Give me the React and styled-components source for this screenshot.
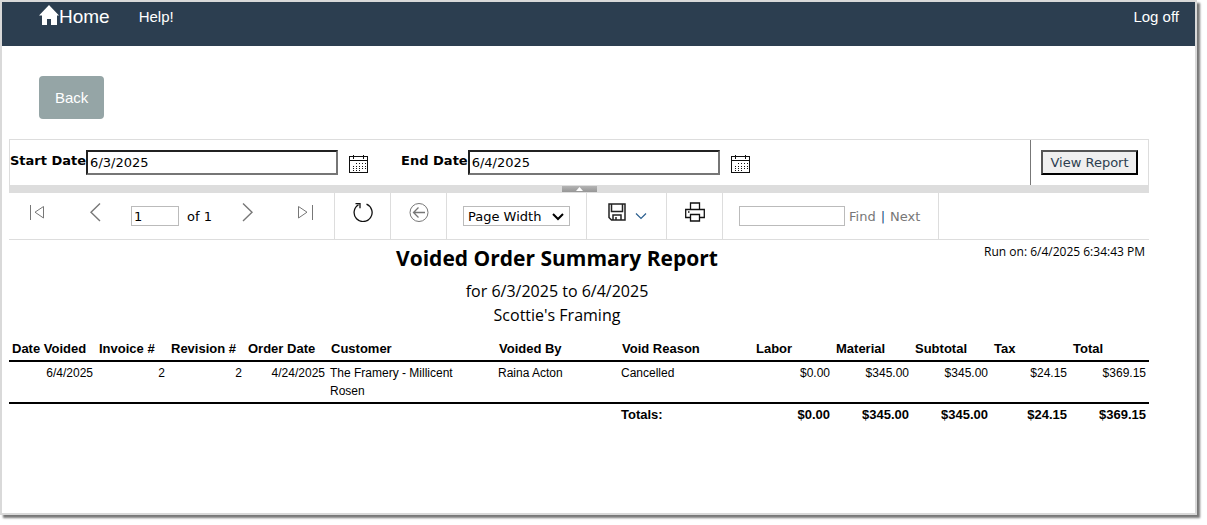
import { useState } from "react";
import styled, { createGlobalStyle } from "styled-components";

const rows = [
  {
    dateVoided: "6/4/2025",
    invoice: 2,
    revision: 2,
    orderDate: "4/24/2025",
    customer: "The Framery - Millicent Rosen",
    voidedBy: "Raina Acton",
    reason: "Cancelled",
    amounts: ["$0.00", "$345.00", "$345.00", "$24.15", "$369.15"],
  },
];

const totals = ["$0.00", "$345.00", "$345.00", "$24.15", "$369.15"];

const columns = [
  { name: "Date Voided", width: 87 },
  { name: "Invoice #", width: 72 },
  { name: "Revision #", width: 77 },
  { name: "Order Date", width: 83 },
  { name: "Customer", width: 168 },
  { name: "Voided By", width: 123 },
  { name: "Void Reason", width: 134 },
  { name: "Labor", width: 80 },
  { name: "Material", width: 79 },
  { name: "Subtotal", width: 79 },
  { name: "Tax", width: 79 },
  { name: "Total", width: 79 },
];

function HomeIcon() {
  return (
    <svg width="20" height="20" viewBox="0 0 20 20" fill="#fff">
      <path d="M10 0 L20 10.5 H18 V20 H12 V14 H8 V20 H3 V10.5 H0 Z" />
    </svg>
  );
}

function CalendarIcon() {
  return (
    <svg width="20" height="20" viewBox="0 0 20 20" fill="none" stroke="#111" shapeRendering="crispEdges">
      <path d="M0.5 2.5 H18.5 V18.5 H0.5 Z M0 6.5 H19 M4.5 1 V5 M14.5 1 V5" />
      <path d="M7 9.5 H17 M4 12.5 H17 M4 14.5 H17 M4 16.5 H13" strokeDasharray="1 2" />
    </svg>
  );
}

function FirstIcon() {
  return (
    <svg width="20" height="20" viewBox="0 0 20 20" fill="none" stroke="#777">
      <path d="M3.5 3 V18 M16.5 4.5 V16 L8 10.2 Z" />
    </svg>
  );
}

function LastIcon() {
  return (
    <svg width="20" height="20" viewBox="0 0 20 20" fill="none" stroke="#777">
      <path d="M16.5 3 V18 M2.5 4.5 V16 L11 10.2 Z" />
    </svg>
  );
}

function PrevIcon() {
  return (
    <svg width="20" height="20" viewBox="0 0 20 20" fill="none" stroke="#777" strokeWidth="1.4">
      <path d="M15 1.5 L6 10.3 L15 19" />
    </svg>
  );
}

function NextIcon() {
  return (
    <svg width="20" height="20" viewBox="0 0 20 20" fill="none" stroke="#777" strokeWidth="1.4">
      <path d="M5 1.5 L14 10.3 L5 19" />
    </svg>
  );
}

function RefreshIcon() {
  return (
    <svg width="20" height="20" viewBox="0 0 20 20" fill="none" stroke="#111" strokeWidth="1.3">
      <path d="M13.5 2.2 A9 9 0 1 1 5.5 2.8 M2.5 1.7 H7 V6.2" />
    </svg>
  );
}

function BackIcon() {
  return (
    <svg width="20" height="20" viewBox="0 0 20 20" fill="none" stroke="#777">
      <circle cx="10" cy="10.5" r="9" />
      <path d="M16 10.5 H4.5 M9.5 5.5 L4.5 10.5 L9.5 15.5" strokeWidth="1.3" />
    </svg>
  );
}

function SaveIcon() {
  return (
    <svg width="20" height="20" viewBox="0 0 20 20" fill="none" stroke="#222" strokeWidth="1.5">
      <path d="M2 2 H18 V18 H4.5 L2 15.5 Z M4.5 2 V9.5 H15.5 V2 M6 18 V13 H14 V18 M9 15 V18" />
    </svg>
  );
}

function PrintIcon() {
  return (
    <svg width="20" height="20" viewBox="0 0 20 20" fill="none" stroke="#111" strokeWidth="1.3">
      <path d="M5.5 7.5 V1 H14.5 V7.5 M5.5 15.5 H0.7 V7.5 H19.3 V15.5 H14.5 M5.5 12.5 H14.5 V19 H5.5 Z M3 10 H4.5" />
    </svg>
  );
}

function ViewerToolbar() {
  const [page, setPage] = useState("1");
  const [search, setSearch] = useState("");

  return (
    <Toolbar>
      <PagingGroup>
        <IconButton aria-label="First page"><FirstIcon /></IconButton>
        <Pager>
          <IconButton aria-label="Previous page"><PrevIcon /></IconButton>
          <PageCount>
            <SmallInput $width={48} aria-label="Current page" value={page} onChange={(e) => setPage(e.target.value)} />
            <span>of 1</span>
          </PageCount>
          <IconButton aria-label="Next page"><NextIcon /></IconButton>
        </Pager>
        <IconButton aria-label="Last page"><LastIcon /></IconButton>
      </PagingGroup>
      <Group $width={56}>
        <IconButton aria-label="Refresh"><RefreshIcon /></IconButton>
      </Group>
      <Group $width={56}>
        <IconButton aria-label="Back to parent report"><BackIcon /></IconButton>
      </Group>
      <Group $width={140}>
        <ZoomPicker>
          <select aria-label="Zoom" defaultValue="Page Width">
            <option>Page Width</option>
            <option>Whole Page</option>
            <option>100%</option>
          </select>
          <svg width="12" height="8" viewBox="0 0 12 8" fill="none" stroke="#000" strokeWidth="2">
            <path d="M1 1 L6 6 L11 1" />
          </svg>
        </ZoomPicker>
      </Group>
      <Group $width={80}>
        <ExportButton aria-label="Export">
          <SaveIcon />
          <svg width="12" height="20" viewBox="0 0 12 20" fill="none" stroke="#2b5f8f" strokeWidth="1.2">
            <path d="M1 11.5 L6 16.5 L11 11.5" />
          </svg>
        </ExportButton>
      </Group>
      <Group $width={56}>
        <IconButton aria-label="Print"><PrintIcon /></IconButton>
      </Group>
      <FindGroup $width={216}>
        <SmallInput $width={106} aria-label="Find text" value={search} onChange={(e) => setSearch(e.target.value)} />
        <FindLinks>
          <a href="#find">Find</a>
          <span>|</span>
          <a href="#next">Next</a>
        </FindLinks>
      </FindGroup>
    </Toolbar>
  );
}

function ReportTable() {
  return (
    <Table>
      <colgroup>
        {columns.map((col) => (
          <Col key={col.name} $width={col.width} />
        ))}
      </colgroup>
      <thead>
        <tr>
          {columns.map((col) => (
            <th key={col.name} scope="col">{col.name}</th>
          ))}
        </tr>
      </thead>
      <tbody>
        {rows.map((row) => (
          <tr key={row.invoice}>
            <Cell $right>{row.dateVoided}</Cell>
            <Cell $right>{row.invoice}</Cell>
            <Cell $right>{row.revision}</Cell>
            <Cell $right>{row.orderDate}</Cell>
            <Cell>{row.customer}</Cell>
            <Cell>{row.voidedBy}</Cell>
            <Cell>{row.reason}</Cell>
            {row.amounts.map((amount, i) => (
              <Cell key={i} $right>{amount}</Cell>
            ))}
          </tr>
        ))}
      </tbody>
      <tfoot>
        <tr>
          <Cell colSpan="6" />
          <Cell>Totals:</Cell>
          {totals.map((total, i) => (
            <Cell key={i} $right>{total}</Cell>
          ))}
        </tr>
      </tfoot>
    </Table>
  );
}

function App() {
  const [startDate, setStartDate] = useState("6/3/2025");
  const [endDate, setEndDate] = useState("6/4/2025");

  return (
    <>
      <GlobalStyle />
      <Page>
        <Navbar>
          <Brand href="#home"><HomeIcon />Home</Brand>
          <NavLink href="#help">Help!</NavLink>
          <NavLink href="#logoff" $end>Log off</NavLink>
        </Navbar>
        <BackButton type="button">Back</BackButton>
        <Viewer>
          <Parameters>
            <Fields>
              <Field>
                <label htmlFor="start">Start Date</label>
                <DateInput id="start" value={startDate} onChange={(e) => setStartDate(e.target.value)} />
                <CalendarButton type="button" aria-label="Pick start date"><CalendarIcon /></CalendarButton>
              </Field>
              <Field>
                <label htmlFor="end">End Date</label>
                <DateInput id="end" value={endDate} onChange={(e) => setEndDate(e.target.value)} />
                <CalendarButton type="button" aria-label="Pick end date"><CalendarIcon /></CalendarButton>
              </Field>
            </Fields>
            <Submit>
              <ViewButton type="button">View Report</ViewButton>
            </Submit>
          </Parameters>
          <Splitter>
            <Handle aria-label="Hide parameters">
              <svg width="7" height="4" viewBox="0 0 7 4" fill="#fff">
                <path d="M0 4 L3.5 0 L7 4 Z" />
              </svg>
            </Handle>
          </Splitter>
          <ViewerToolbar />
          <ReportHeader>
            <Titles>
              <h1>Voided Order Summary Report</h1>
              <p>for 6/3/2025 to 6/4/2025</p>
              <p>Scottie's Framing</p>
            </Titles>
            <RunOn>Run on: 6/4/2025 6:34:43 PM</RunOn>
          </ReportHeader>
          <ReportTable />
        </Viewer>
      </Page>
    </>
  );
}

const GlobalStyle = createGlobalStyle`
  * {
    box-sizing: border-box;
  }
  body {
    margin: 0;
    background: #fff;
    color: #000;
    font-family: "Liberation Sans", Arial, sans-serif;
  }
  svg {
    display: block;
    flex: none;
  }
`;

const Page = styled.main`
  min-height: calc(100vh - 10px);
  margin: 0 10px 10px 0;
  border: 2px solid #d9d9d9;
  background: #fff;
  box-shadow: 3px 3px 2px #777;
`;

const Navbar = styled.nav`
  display: flex;
  align-items: flex-start;
  height: 44px;
  padding: 3px 16px 0 37px;
  background: #2c3e50;
`;

const Brand = styled.a`
  display: flex;
  align-items: flex-start;
  margin-right: 29px;
  color: #fff;
  font-size: 19px;
  line-height: 24px;
  text-decoration: none;
`;

const NavLink = styled.a`
  margin-left: ${(props) => (props.$end ? "auto" : "0")};
  color: #fff;
  font-size: 15px;
  line-height: 24px;
  text-decoration: none;
`;

const BackButton = styled.button`
  display: block;
  margin: 30px 0 20px 37px;
  padding: 10px 16px;
  border: 0;
  border-radius: 4px;
  background: #95a5a6;
  color: #fff;
  font: 15px/23px "Liberation Sans", Arial, sans-serif;
`;

const Viewer = styled.section`
  margin: 0 46px 0 7px;
  font-family: "DejaVu Sans", Verdana, sans-serif;
  font-size: 13px;
`;

const Parameters = styled.form`
  display: flex;
  height: 46px;
  border: 1px solid #ddd;
  border-bottom: 0;
`;

const Fields = styled.div`
  display: flex;
  align-items: center;
  gap: 32px;
  flex: 1;
`;

const Field = styled.div`
  display: flex;
  align-items: center;

  label {
    padding-bottom: 4px;
    font-weight: bold;
    white-space: nowrap;
  }
`;

const DateInput = styled.input`
  width: 252px;
  height: 25px;
  padding: 0 2px;
  border: 2px inset #767676;
  font: 13px "DejaVu Sans", Verdana, sans-serif;
`;

const CalendarButton = styled.button`
  margin-left: 11px;
  padding: 2px 0 0;
  border: 0;
  background: none;
`;

const Submit = styled.div`
  display: flex;
  align-items: center;
  padding: 0 10px;
  border-left: 1px solid #777;
`;

const ViewButton = styled.button`
  width: 97px;
  height: 25px;
  padding: 0;
  border: 2px outset #000;
  background: #efefef;
  color: #2c3e50;
  font: 13px "DejaVu Sans", Verdana, sans-serif;
  white-space: nowrap;
`;

const Splitter = styled.div`
  display: flex;
  justify-content: center;
  height: 8px;
  padding: 1px 0;
  background: #ddd;
`;

const Handle = styled.button`
  display: flex;
  align-items: center;
  justify-content: center;
  width: 35px;
  padding: 0;
  border: 0;
  background: linear-gradient(#b4b4b4, #969696);
`;

const Toolbar = styled.div`
  display: flex;
  height: 47px;
  border-bottom: 1px solid #ddd;
`;

const Group = styled.div`
  display: flex;
  align-items: center;
  justify-content: center;
  gap: 4px;
  width: ${(props) => props.$width}px;
  border-right: 1px solid #ddd;
`;

const PagingGroup = styled(Group)`
  justify-content: space-between;
  width: 326px;
  padding: 0 18px;
`;

const FindGroup = styled(Group)`
  justify-content: flex-start;
  padding: 0 16px;
`;

const Pager = styled.div`
  display: flex;
  align-items: center;
  gap: 26px;
`;

const IconButton = styled.button`
  padding: 0 0 8px;
  border: 0;
  background: none;
`;

const ExportButton = styled(IconButton)`
  display: flex;
  gap: 8px;
`;

const PageCount = styled.div`
  display: flex;
  align-items: center;
  gap: 8px;
`;

const SmallInput = styled.input`
  width: ${(props) => props.$width}px;
  height: 20px;
  padding: 0 2px;
  border: 1px solid #bbb;
  font: 13px "DejaVu Sans", Verdana, sans-serif;
`;

const ZoomPicker = styled.div`
  position: relative;

  select {
    display: block;
    width: 107px;
    height: 20px;
    padding: 0 4px;
    border: 1px solid #bbb;
    appearance: none;
    background: #fff;
    color: #000;
    font: 13px "DejaVu Sans", Verdana, sans-serif;
  }

  svg {
    position: absolute;
    top: 7px;
    right: 6px;
    pointer-events: none;
  }
`;

const FindLinks = styled.div`
  display: flex;
  gap: 5px;
  color: #1c4f80;
  white-space: nowrap;

  a {
    color: #777;
    text-decoration: none;
  }
`;

const ReportHeader = styled.header`
  display: grid;
  grid-template-columns: 158px 1fr 202px;
  font-family: "Open Sans", "Segoe UI", sans-serif;
`;

const Titles = styled.div`
  grid-column: 2;
  padding: 2px 0 11px;
  text-align: center;

  h1 {
    margin: 0 0 5px;
    font-size: 21px;
    line-height: 32px;
  }

  p {
    margin: 0;
    font-size: 16px;
    line-height: 24px;
  }
`;

const RunOn = styled.div`
  padding: 3px 4px 0 0;
  font-size: 12px;
  line-height: 18px;
  text-align: right;
  white-space: nowrap;
`;

const Table = styled.table`
  width: 100%;
  border-collapse: collapse;
  table-layout: fixed;
  font: 12px/18px "Liberation Sans", Arial, sans-serif;

  th {
    padding: 2px 2px 2px 3px;
    font-size: 13px;
    text-align: left;
    white-space: nowrap;
  }

  thead,
  tbody {
    border-bottom: 2px solid #000;
  }

  tfoot td {
    font-size: 13px;
    font-weight: bold;
  }
`;

const Col = styled.col`
  width: ${(props) => props.$width}px;
`;

const Cell = styled.td`
  padding: ${(props) => (props.$right ? "2px 3px 2px 2px" : "2px 12px 2px 2px")};
  text-align: ${(props) => (props.$right ? "right" : "left")};
  vertical-align: top;
`;

export default App;
